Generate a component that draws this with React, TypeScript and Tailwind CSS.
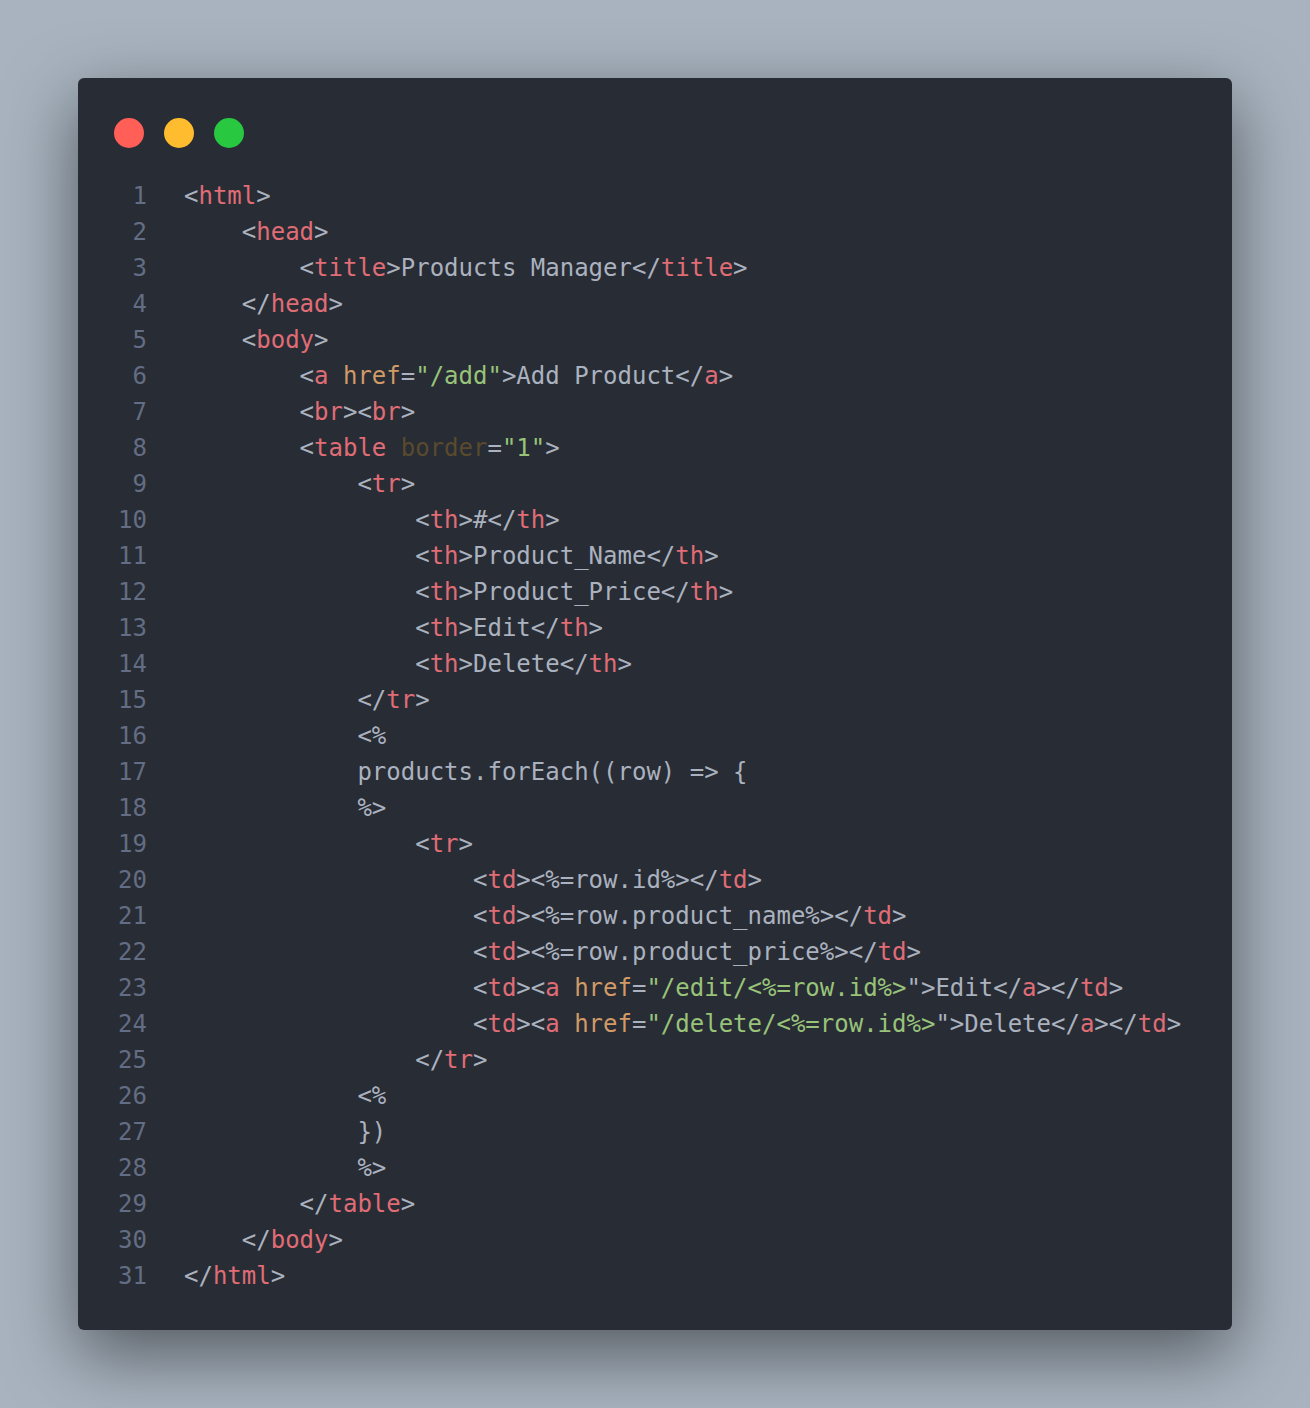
import React from "react";

type Tok = [string, string];

// token colours (One Dark-ish)
const C: Record<string, string> = {
	p: "text-[#abb2bf]",
	t: "text-[#e06c75]",
	a: "text-[#d19a66]",
	s: "text-[#98c379]",
	b: "text-[#5a4a2d]",
	x: "text-[#abb2bf]"
};

const open = (name: string): Tok[] => [["p", "<"], ["t", name], ["p", ">"]];
const close = (name: string): Tok[] => [["p", "</"], ["t", name], ["p", ">"]];
const wrap = (name: string, inner: Tok[]): Tok[] => [...open(name), ...inner, ...close(name)];

const LINES: [number, Tok[]][] = [
	[0, open("html")],
	[1, open("head")],
	[2, wrap("title", [["x", "Products Manager"]])],
	[1, close("head")],
	[1, open("body")],
	[2, [["p", "<"], ["t", "a"], ["p", " "], ["a", "href"], ["p", "="], ["s", '"/add"'], ["p", ">"], ["x", "Add Product"], ...close("a")]],
	[2, [...open("br"), ...open("br")]],
	[2, [["p", "<"], ["t", "table"], ["p", " "], ["b", "border"], ["p", "="], ["s", '"1"'], ["p", ">"]]],
	[3, open("tr")],
	[4, wrap("th", [["x", "#"]])],
	[4, wrap("th", [["x", "Product_Name"]])],
	[4, wrap("th", [["x", "Product_Price"]])],
	[4, wrap("th", [["x", "Edit"]])],
	[4, wrap("th", [["x", "Delete"]])],
	[3, close("tr")],
	[3, [["x", "<%"]]],
	[3, [["x", "products.forEach((row) => {"]]],
	[3, [["x", "%>"]]],
	[4, open("tr")],
	[5, wrap("td", [["x", "<%=row.id%>"]])],
	[5, wrap("td", [["x", "<%=row.product_name%>"]])],
	[5, wrap("td", [["x", "<%=row.product_price%>"]])],
	[5, wrap("td", [["p", "<"], ["t", "a"], ["p", " "], ["a", "href"], ["p", "="], ["s", '"/edit/<%=row.id%>'], ["p", '">'], ["x", "Edit"], ...close("a")])],
	[5, wrap("td", [["p", "<"], ["t", "a"], ["p", " "], ["a", "href"], ["p", "="], ["s", '"/delete/<%=row.id%>'], ["p", '">'], ["x", "Delete"], ...close("a")])],
	[4, close("tr")],
	[3, [["x", "<%"]]],
	[3, [["x", "})"]]],
	[3, [["x", "%>"]]],
	[2, close("table")],
	[1, close("body")],
	[0, close("html")]
];

export default function App() {
	return (
		<div className="flex min-h-[1408px] w-full items-start justify-center bg-[#a8b3bf] pt-[78px]">
			<div className="w-[1154px] rounded-md bg-[#282c35] pb-[36px] pl-[36px] pr-[36px] pt-[40px] shadow-[0_24px_70px_rgba(0,0,0,0.5)]">
				{/* traffic lights */}
				<div className="flex gap-5">
					<span className="h-[30px] w-[30px] rounded-full bg-[#ff5f57]" />
					<span className="h-[30px] w-[30px] rounded-full bg-[#febc2e]" />
					<span className="h-[30px] w-[30px] rounded-full bg-[#28c840]" />
				</div>

				<div
					className="mt-[30px] flex text-[24px] leading-[36px]"
					style={{ fontFamily: '"DejaVu Sans Mono", "Liberation Mono", monospace' }}
				>
					<div className="w-[33px] select-none text-right text-[#636d83]">
						{LINES.map((_, i) => (
							<div key={i}>{i + 1}</div>
						))}
					</div>
					<div className="ml-[37px] whitespace-pre">
						{LINES.map(([indent, toks], i) => (
							<div key={i}>
								{"    ".repeat(indent)}
								{toks.map(([k, txt], j) => (
									<span key={j} className={C[k]}>
										{txt}
									</span>
								))}
							</div>
						))}
					</div>
				</div>
			</div>
		</div>
	);
}
